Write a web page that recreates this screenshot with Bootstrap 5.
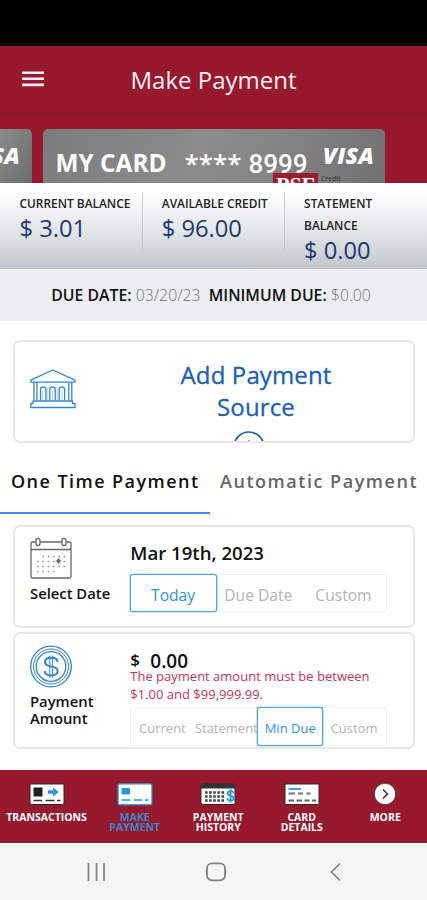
<!DOCTYPE html>
<html lang="en">
<head>
<meta charset="utf-8">
<meta name="viewport" content="width=device-width, initial-scale=1">
<title>Make Payment</title>
<link href="https://cdn.jsdelivr.net/npm/bootstrap@5.3.0/dist/css/bootstrap.min.css" rel="stylesheet">
<style>
  :root { --crimson: #97192e; --azure: #2d94d6; }
  body { font-family: "Open Sans", "Noto Sans", sans-serif; color: #111; background: #fff; overflow: hidden; }
  svg { display: block; flex: none; }
  .screen { width: 427px; height: 900px; }
  .screen > * { flex: none; }
  .status-strip { height: 46px; background: #000; }
  .top-bar { height: 66px; background: var(--crimson); padding-left: 22px; padding-right: 44px; }
  .top-title { font-size: 24px; color: #fbeef0; padding-top: 1px; }
  .wallet { height: 71px; background: linear-gradient(#83172a 0, #8e182c 3px, #97192e 5px); padding-top: 17px; gap: 11px; }
  .plastic { height: 54px; color: #fff; background: linear-gradient(115deg, #7c7c7c, #8b8b8b 45%, #858585 65%, #717171); border-radius: 5px 5px 0 0; }
  .plastic-prev { width: 32px; border-radius: 0 5px 0 0; padding-right: 12px; background: linear-gradient(120deg, #8a8a8a, #6d6d6d); }
  .plastic-main { width: 342px; padding: 17px 11px 0 12.5px; }
  .visa { font-weight: 800; font-style: italic; font-size: 23px; line-height: 23px; letter-spacing: .2px; }
  .plastic-prev .visa { margin-top: 15px; }
  .plastic-main .visa { margin-top: -2px; }
  .plastic-name { font-weight: 700; font-size: 24.4px; line-height: 34px; width: 129px; white-space: nowrap; }
  .plastic-stars { font-weight: 600; font-size: 26px; line-height: 34px; width: 64px; }
  .plastic-digits { font-family: Roboto, sans-serif; font-weight: 500; font-size: 26px; line-height: 36px; }
  .issuer { left: 230px; top: 44px; height: 10px; width: 45px; background: #9b1c31; font: 700 22px/23px "Liberation Serif", serif; text-align: center; overflow: hidden; }
  .issuer-tag { left: 278px; top: 45px; font-size: 7px; line-height: 10px; color: #333; }
  .stats { height: 86px; background: linear-gradient(#fff 0, #fbfcfc 18%, #dfe2e5 62%, #c0c5c9 100%); padding: 9px 0 0 19.5px; }
  .stat { width: 142.3px; flex: none; }
  .stat + .stat { position: relative; }
  .stat + .stat::before { content: ""; position: absolute; left: -20px; top: 0; width: 1px; height: 61px; background: #c9cdd0; }
  .stat-label { font-size: 11.9px; font-weight: 600; line-height: 22px; color: #222; }
  .stat-value { font-size: 23.7px; line-height: 29px; color: #1d3873; white-space: pre; }
  .due-bar { height: 52px; background: #eceef0; font-size: 15.8px; padding: 2px 5px 0 0; }
  .due-bar b { font-weight: 600; }
  .due-bar span { color: #6f7173; font-weight: 300; }
  .panel { border: 2px solid #e8e8e8; border-radius: 7px; background: #fff; margin: 0 12px 0 13px; }
  .source-panel { height: 103px; margin-top: 19px; padding: 17px 15px 0; overflow: hidden; }
  .source-panel .bank { margin-top: 10px; }
  .source-link { font-size: 24px; letter-spacing: .12px; line-height: 32px; color: #1c60ad; -webkit-text-stroke: .3px #1c60ad; width: 180px; margin-left: 90px; }
  .source-link svg { margin: 8px 0 0 67px; }
  .pay-tabs { height: 55px; margin-top: 16px; font-size: 18px; font-weight: 600; letter-spacing: 1.45px; line-height: 45px; }
  .pay-tab { color: #666; padding-left: 10px; white-space: nowrap; letter-spacing: 1.53px; }
  .pay-tab.on { color: #111; width: 210px; padding-left: 11px; border-bottom: 2px solid #4189e2; letter-spacing: 1.45px; }
  .date-panel { height: 103px; margin-top: 11px; }
  .amount-panel { height: 117px; margin-top: 4px; }
  .panel-side { width: 99.5px; margin-left: 15px; font-size: 14.8px; font-weight: 600; line-height: 17px; }
  .panel-main { width: 257.5px; }
  .headline { font-size: 18.6px; font-weight: 600; line-height: 24px; padding: 14px 0 0 .8px; }
  .amount-panel .headline { font-size: 19px; line-height: 22px; padding-top: 16px; }
  .dollar { width: 20px; font-size: 17px; line-height: 20px; }
  .segs { border: 1px solid #f0f0f0; border-radius: 3px; }
  .seg { flex: 1 1 0; color: #b3b3b3; text-align: center; white-space: nowrap; margin: -1px; border: 1px solid transparent; }
  .seg.on { color: var(--azure); border-color: #50a5dc; border-radius: 3px; background: #fff; box-shadow: 0 0 0 .3px #50a5dc; }
  .segs-date { height: 38px; margin-top: 9px; font-size: 15.6px; line-height: 40px; }
  .segs-amount { height: 39px; margin-top: 4.5px; font-size: 13px; line-height: 41px; }
  .amount-error { font-size: 13px; line-height: 18px; margin-top: -5.5px; padding-left: .8px; color: #c43555; white-space: nowrap; }
  .tab-dock { height: 73px; margin-top: 21px; background: var(--crimson); color: #fff; font-size: 10.5px; font-weight: 700; line-height: 10px; padding-top: 12px; }
  .dock-item { width: 83.5px; text-align: center; }
  .dock-item:first-child { width: 93px; }
  .dock-item svg { margin-bottom: 6px; }
  .dock-item.on { color: #3b86cb; }
  .sys-nav { height: 57px; background: #f5f5f5; padding: 0 86px 0 87px; }
</style>
</head>
<body>
<main class="screen d-flex flex-column">
  <div class="status-strip"></div>

  <header class="top-bar d-flex align-items-center">
    <svg width="22" height="16" viewBox="0 0 22 16"><path d="M0 1.7h22M0 7.8h22M0 13.9h22" stroke="#fbeef0" stroke-width="2.6"/></svg>
    <div class="top-title flex-grow-1 text-center">Make Payment</div>
  </header>

  <section class="wallet d-flex">
    <div class="plastic plastic-prev d-flex justify-content-end overflow-hidden"><span class="visa">VISA</span></div>
    <div class="plastic plastic-main d-flex position-relative overflow-hidden">
      <span class="plastic-name">MY CARD</span>
      <span class="plastic-stars">****</span>
      <span class="plastic-digits">8999</span>
      <span class="visa ms-auto">VISA</span>
      <span class="issuer position-absolute">PSF</span>
      <span class="issuer-tag position-absolute">Credit</span>
    </div>
  </section>

  <section class="stats d-flex">
    <div class="stat"><div class="stat-label">CURRENT BALANCE</div><div class="stat-value">$ 3.01</div></div>
    <div class="stat"><div class="stat-label">AVAILABLE CREDIT</div><div class="stat-value">$ 96.00</div></div>
    <div class="stat"><div class="stat-label">STATEMENT<br>BALANCE</div><div class="stat-value">$ 0.00</div></div>
  </section>

  <div class="due-bar d-flex align-items-center justify-content-center">
    <div><b>DUE DATE:</b> <span>03/20/23</span>&nbsp;<b> MINIMUM DUE:</b> <span>$0.00</span></div>
  </div>

  <section class="panel source-panel d-flex">
    <svg class="bank" width="46" height="40" viewBox="0 0 46 40" fill="none" stroke="#3484cb" stroke-width="1.3" stroke-linejoin="round">
      <path d="M.8 11.2 22.8 1 45 11.2v2H.8z"/>
      <path d="M4 13.4v18.4M7 13.4v18.4M38.8 13.4v18.4M41.8 13.4v18.4"/>
      <path d="M10.5 31.5v-11a2.7 2.7 0 0 1 5.4 0v11M19.8 31.5v-11a2.7 2.7 0 0 1 5.4 0v11M29.2 31.5v-11a2.7 2.7 0 0 1 5.4 0v11"/>
      <path d="M12.5 31v-9M17.8 31V18M22.5 31v-9M27.2 31V18M32 31v-9" stroke-width=".7" opacity=".6"/>
      <path d="M3 32h39.5v2.5H45v4H.8v-4H3z"/>
    </svg>
    <div class="source-link text-center">Add Payment Source
      <svg width="32" height="32" viewBox="0 0 32 32" fill="none" stroke="#1c60ad" stroke-width="1.7"><circle cx="16" cy="16" r="15"/><path d="M16 9v14M9 16h14" stroke="#7a8fa8"/></svg>
    </div>
  </section>

  <nav class="pay-tabs d-flex">
    <div class="pay-tab on">One Time Payment</div>
    <div class="pay-tab">Automatic Payment</div>
  </nav>

  <section class="panel date-panel d-flex">
    <div class="panel-side pt-2">
      <svg width="42" height="46" viewBox="0 0 42 46" fill="none" stroke="#666" stroke-width="1.3">
        <rect x="1" y="7" width="40" height="36" rx="1.5"/><path d="M1 14.5h40"/>
        <rect x="6" y="3.5" width="4" height="7" rx="2" fill="#fff"/><rect x="32" y="3.5" width="4" height="7" rx="2" fill="#fff"/>
        <path d="M12.5 21.5h24M7 26.5h30M7 31.5h30M7 36.5h19" stroke="#999" stroke-width="1.6" stroke-dasharray="1.6 3.7"/>
        <circle cx="28.5" cy="26" r="2" fill="#666" stroke="none"/><path d="M28.5 23v6M25.5 26h6" stroke="#777" stroke-width=".9"/>
      </svg>
      <div class="mt-1 text-nowrap">Select Date</div>
    </div>
    <div class="panel-main">
      <div class="headline">Mar 19th, 2023</div>
      <div class="segs segs-date d-flex">
        <div class="seg on">Today</div><div class="seg">Due Date</div><div class="seg">Custom</div>
      </div>
    </div>
  </section>

  <section class="panel amount-panel d-flex">
    <div class="panel-side">
      <svg class="mt-2" width="44" height="51" viewBox="0 0 44 51" fill="none" stroke="#2f83cb">
        <circle cx="21" cy="24.5" r="20.3" stroke-width="1.3"/><circle cx="21" cy="24.5" r="17.5" stroke-width="1"/><circle cx="21" cy="24.5" r="14.8" stroke-width="1.3"/>
        <path d="M27.5 20c0-2.7-2.5-4.2-6.3-4.2-3.7 0-6.2 1.5-6.2 4.2 0 2.6 2 3.7 6 4.4 4.5.8 6.7 1.9 6.7 4.7 0 2.7-2.5 4.3-6.5 4.3s-6.5-1.6-6.5-4.4" stroke-width="1.9"/>
        <path d="M19.8 13.5v22.5M22.4 13.5v22.5" stroke-width="1"/>
      </svg>
      <div>Payment<br>Amount</div>
    </div>
    <div class="panel-main">
      <div class="headline d-flex"><span class="dollar">$</span><span>0.00</span></div>
      <div class="amount-error">The payment amount must be between<br>$1.00 and $99,999.99.</div>
      <div class="segs segs-amount d-flex">
        <div class="seg">Current</div><div class="seg">Statement</div><div class="seg on">Min Due</div><div class="seg">Custom</div>
      </div>
    </div>
  </section>

  <nav class="tab-dock d-flex">
    <div class="dock-item d-flex flex-column align-items-center">
      <svg width="36" height="24" viewBox="0 0 36 24"><rect x="1" y="2" width="34" height="20.5" rx="1.5" fill="#fff" stroke="#33282c"/><rect x="4.5" y="5.5" width="9" height="9" fill="#222"/><path d="M19 8.2h5V5.5l6 4.5-6 4.5v-2.7h-5z" fill="#2a96dc"/><path d="M4.5 18.5h8.5M16.5 18.5h9M28 18.5h3.5" stroke="#333" stroke-width="1.6"/></svg>
      <div>TRANSACTIONS</div>
    </div>
    <div class="dock-item on d-flex flex-column align-items-center">
      <svg width="36" height="24" viewBox="0 0 36 24"><rect x="1" y="1.8" width="34" height="21" rx="1.5" fill="#fff" stroke="#2a86cc" stroke-width="1.3"/><rect x="4.5" y="6" width="8.5" height="6.5" rx="1" fill="#2a96dc"/><path d="M4.5 18h9M17 18h8M28 18h3.5" stroke="#2a96dc" stroke-width="1.6"/></svg>
      <div>MAKE<br>PAYMENT</div>
    </div>
    <div class="dock-item d-flex flex-column align-items-center">
      <svg width="36" height="24" viewBox="0 0 36 24"><rect x="1" y="2" width="34" height="20.5" rx="2" fill="#fff" stroke="#33282c"/><path d="M1 6.5V3.5Q1 2 2.5 2h31Q35 2 35 3.5v3z" fill="#333"/><path d="M5 10.5h19M5 14.5h19M5 18.5h19" stroke="#444" stroke-width="2.4" stroke-dasharray="2.6 1.5"/><path d="M33.5 11.3c0-1.5-1.2-2.2-2.9-2.2-1.8 0-2.9.9-2.9 2.3 0 3 6 1.7 6 4.8 0 1.5-1.3 2.4-3.1 2.4-1.9 0-3.1-.8-3.1-2.4M30.6 7.2v13.3" fill="none" stroke="#2a96dc" stroke-width="1.8"/></svg>
      <div>PAYMENT<br>HISTORY</div>
    </div>
    <div class="dock-item d-flex flex-column align-items-center">
      <svg width="36" height="24" viewBox="0 0 36 24"><rect x="1" y="2" width="34" height="20.5" rx="1" fill="#fff" stroke="#33282c"/><path d="M4.5 7h12.5" stroke="#2a96dc" stroke-width="1.8"/><path d="M4.5 11.5h6.5M14 11.5h5M22.5 11.5h4" stroke="#777" stroke-width="1.8"/><path d="M4.5 18.5h5.5M12.5 18.5h5.5M20.5 18.5h5M28 18.5h4" stroke="#666" stroke-width="2"/></svg>
      <div>CARD<br>DETAILS</div>
    </div>
    <div class="dock-item d-flex flex-column align-items-center">
      <svg width="24" height="24" viewBox="0 0 24 24"><circle cx="12" cy="12" r="10.7" fill="#fff" stroke="#33282c" stroke-width=".8"/><path d="m10 7.5 4.5 4.5-4.5 4.5" fill="none" stroke="#333" stroke-width="1.5"/></svg>
      <div>MORE</div>
    </div>
  </nav>

  <footer class="sys-nav d-flex align-items-center justify-content-between">
    <svg width="19" height="20" viewBox="0 0 19 20"><path d="M1.5 1v18M9.5 1v18M17 1v18" stroke="#808080" stroke-width="1.7"/></svg>
    <svg class="me-1" width="20" height="20" viewBox="0 0 20 20"><rect x="1" y="1.3" width="18" height="17" rx="5" fill="none" stroke="#808080" stroke-width="1.8"/></svg>
    <svg width="11" height="20" viewBox="0 0 11 20"><path d="M10 1.5 1.5 10l8.5 8.5" fill="none" stroke="#808080" stroke-width="1.7"/></svg>
  </footer>
</main>
<script src="https://cdn.jsdelivr.net/npm/bootstrap@5.3.0/dist/js/bootstrap.bundle.min.js"></script>
</body>
</html>
